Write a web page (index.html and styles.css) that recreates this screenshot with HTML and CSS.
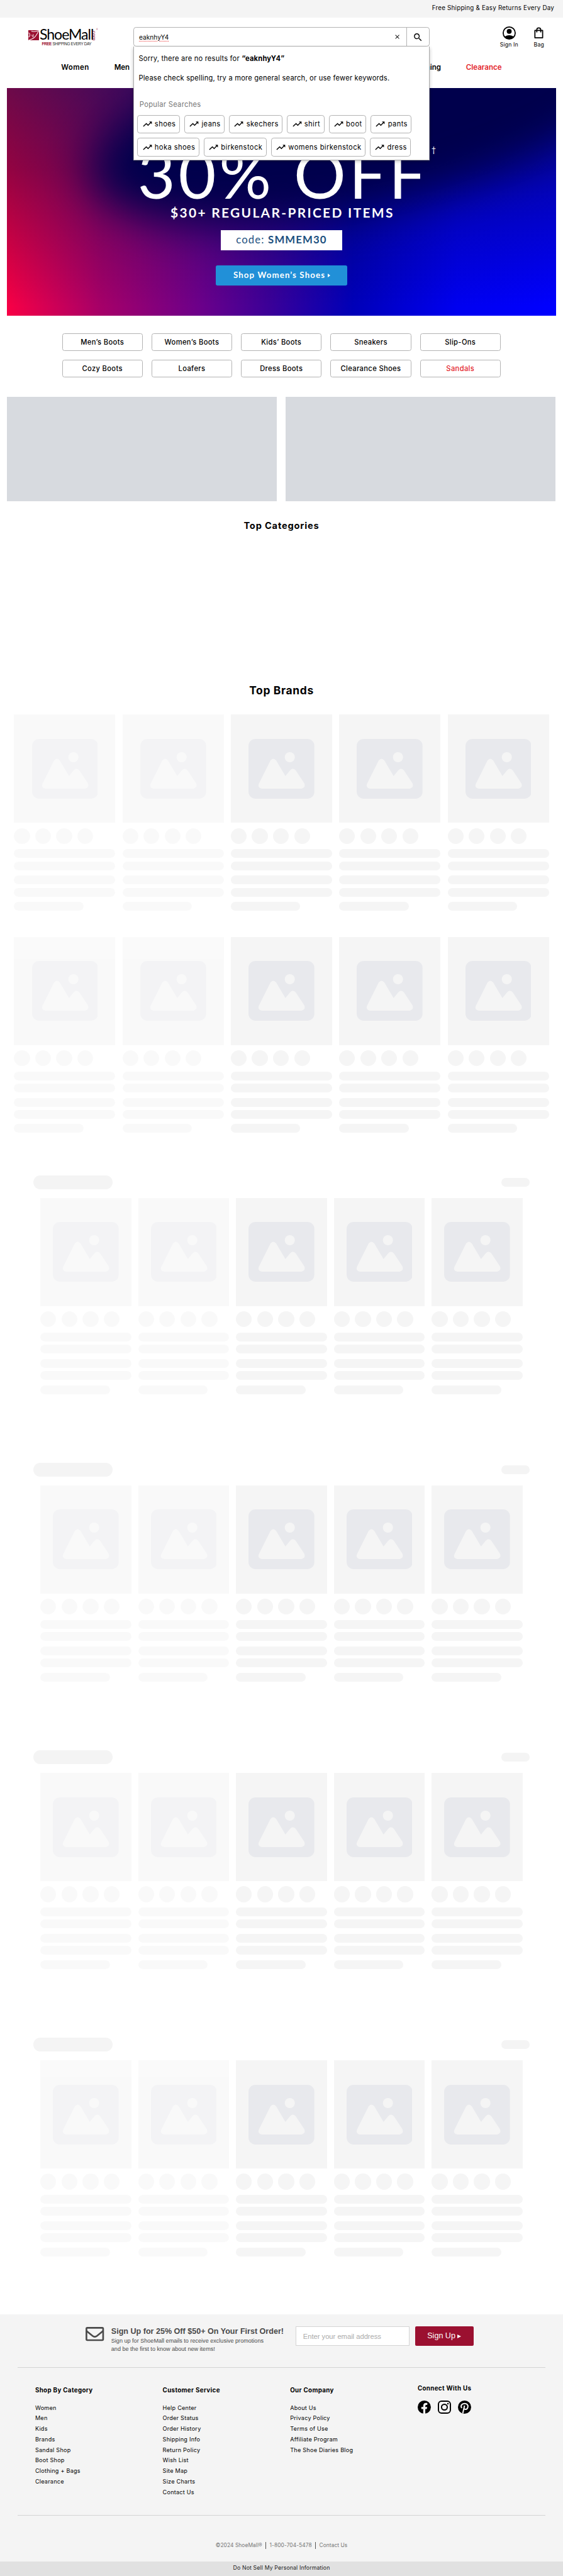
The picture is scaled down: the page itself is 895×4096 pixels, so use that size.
FILE: index.html
```html
<!DOCTYPE html>
<html lang="en">
<head>
<meta charset="utf-8">
<title>ShoeMall</title>
<link rel="stylesheet" href="styles.css">
</head>
<body>
<svg class="defs" aria-hidden="true">
  <symbol id="trend" viewBox="0 0 24 24"><path d="M16 6l2.29 2.29-4.88 4.88-4-4L2 16.59 3.41 18l6-6 4 4 6.3-6.29L22 12V6z"/></symbol>
  <symbol id="photo" viewBox="0 0 150 136"><rect width="150" height="136" rx="16" class="photo-back"/><circle cx="94" cy="41.5" r="11.5" class="photo-cut"/><path class="photo-cut" d="M50 49Q56.500 41.500 63 49L84 84.500 94.500 71.500Q101 64.500 107.500 71.500L127 101Q131 110 121 113H30Q20 111 23.500 102Z"/></symbol>
</svg>
<div class="page">
  <div class="promo-bar">Free Shipping &amp; Easy Returns Every Day</div>
  <header class="header">
    <div class="header-main">
      <a class="logo">
        <span class="logo-row">
          <svg class="logo-mark" viewBox="0 0 25 24"><rect width="25" height="24" fill="#9b1030"/><path d="M1 6c4 3 3 7 0 10M7 2c7 3 11 0 17-1C20 8 17 15 12 18s-9 4-11 5" fill="none" stroke="#fff" stroke-width="1.500"/><path d="M7 12c1-2 3-1 2 3M11 9c1 2 1 4 0 7" fill="none" stroke="#fff" stroke-width="1.300"/></svg>
          <span class="logo-name">ShoeMall</span><span class="logo-com"><sup>®</sup>com</span>
        </span>
        <span class="logo-tag"><b>FREE</b> SHIPPING EVERY DAY</span>
      </a>
      <div class="search">
        <div class="search-box">
          <span class="search-input"><span>eaknhyY4</span></span>
          <span class="search-clear"><svg viewBox="0 0 24 24"><path d="M19 6.410 17.590 5 12 10.590 6.410 5 5 6.410 10.590 12 5 17.590 6.410 19 12 13.410 17.590 19 19 17.590 13.410 12z"/></svg></span>
          <span class="search-go"><svg viewBox="0 0 24 24"><path d="M15.500 14h-.79l-.28-.27C15.410 12.590 16 11.110 16 9.500 16 5.910 13.090 3 9.500 3S3 5.910 3 9.500 5.910 16 9.500 16c1.610 0 3.090-.59 4.230-1.570l.27.28v.79l5 4.990L20.490 19l-4.990-5zm-6 0C7.010 14 5 11.990 5 9.500S7.010 5 9.500 5 14 7.010 14 9.500 11.990 14 9.500 14z"/></svg></span>
        </div>
        <div class="suggest">
          <p class="suggest-line">Sorry, there are no results for <b>“eaknhyY4”</b></p>
          <p class="suggest-line">Please check spelling, try a more general search, or use fewer keywords.</p>
          <p class="suggest-head">Popular Searches</p>
          <div class="chips">
            <span class="chip"><svg><use href="#trend"/></svg>shoes</span>
            <span class="chip"><svg><use href="#trend"/></svg>jeans</span>
            <span class="chip"><svg><use href="#trend"/></svg>skechers</span>
            <span class="chip"><svg><use href="#trend"/></svg>shirt</span>
            <span class="chip"><svg><use href="#trend"/></svg>boot</span>
            <span class="chip"><svg><use href="#trend"/></svg>pants</span>
          </div>
          <div class="chips">
            <span class="chip"><svg><use href="#trend"/></svg>hoka shoes</span>
            <span class="chip"><svg><use href="#trend"/></svg>birkenstock</span>
            <span class="chip"><svg><use href="#trend"/></svg>womens birkenstock</span>
            <span class="chip"><svg><use href="#trend"/></svg>dress</span>
          </div>
        </div>
      </div>
      <div class="tools">
        <a class="tool"><svg viewBox="0 0 30 30"><circle cx="15" cy="15" r="13.700" fill="none" stroke="#000" stroke-width="2.600"/><circle cx="15" cy="11.200" r="5.600"/><path d="M5 24C8 18.500 22 18.500 25 24 20 30 10 30 5 24Z"/></svg>Sign In</a>
        <a class="tool"><svg viewBox="0 0 30 30"><path d="M6.200 9.200h17.600v16.600H6.200zM10.500 13.500V8a4.500 4.500 0 0 1 9 0v5.500" fill="none" stroke="#000" stroke-width="2.500" stroke-linejoin="round"/></svg>Bag</a>
      </div>
    </div>
    <nav class="nav">
      <a class="nav-women">Women</a><a class="nav-men">Men</a><a class="nav-clothing"><span>Cloth</span>ing</a><a class="sale">Clearance</a>
    </nav>
  </header>

  <section class="banner">
    <div class="banner-body">
      <p class="banner-off">30% OFF<sup>†</sup></p>
      <p class="banner-items">$30+ REGULAR-PRICED ITEMS</p>
      <p class="banner-code">code: <b>SMMEM30</b></p>
      <a class="banner-cta">Shop Women’s Shoes<i></i></a>
    </div>
  </section>

  <div class="links">
    <a>Men’s Boots</a><a>Women’s Boots</a><a>Kids’ Boots</a><a>Sneakers</a><a>Slip-Ons</a>
    <a>Cozy Boots</a><a>Loafers</a><a>Dress Boots</a><a>Clearance Shoes</a><a class="sale">Sandals</a>
  </div>

  <div class="tiles"><div></div><div></div></div>
  <h2 class="top-categories">Top Categories</h2>
  <h2 class="top-brands">Top Brands</h2>

  <div class="rows"><div class="cards"></div><div class="cards"></div></div>
  <section class="shelf"><div class="shelf-head"><i></i><i></i></div><div class="cards"></div></section>
  <section class="shelf"><div class="shelf-head"><i></i><i></i></div><div class="cards"></div></section>
  <section class="shelf"><div class="shelf-head"><i></i><i></i></div><div class="cards"></div></section>
  <section class="shelf"><div class="shelf-head"><i></i><i></i></div><div class="cards"></div></section>

  <footer class="footer">
    <div class="signup">
      <svg class="mail" viewBox="0 0 42 32"><rect x="2" y="2" width="38" height="28" rx="2" fill="none" stroke="#4a4a4a" stroke-width="3.800"/><path d="M2 9l14 11.500q5 4 10 0L40 9" fill="none" stroke="#4a4a4a" stroke-width="3.800"/></svg>
      <div class="signup-text">
        <h3>Sign Up for 25% Off $50+ On Your First Order!</h3>
        <p>Sign up for ShoeMall emails to receive exclusive promotions<br>and be the first to know about new items!</p>
      </div>
      <div class="email">Enter your email address</div>
      <a class="signup-btn">Sign Up<i></i></a>
    </div>
    <div class="columns">
      <div><h4>Shop By Category</h4><a>Women</a><a>Men</a><a>Kids</a><a>Brands</a><a>Sandal Shop</a><a>Boot Shop</a><a>Clothing + Bags</a><a>Clearance</a></div>
      <div><h4>Customer Service</h4><a>Help Center</a><a>Order Status</a><a>Order History</a><a>Shipping Info</a><a>Return Policy</a><a>Wish List</a><a>Site Map</a><a>Size Charts</a><a>Contact Us</a></div>
      <div><h4>Our Company</h4><a>About Us</a><a>Privacy Policy</a><a>Terms of Use</a><a>Affiliate Program</a><a>The Shoe Diaries Blog</a></div>
      <div class="connect"><h4>Connect With Us</h4>
        <div class="social">
          <svg viewBox="0 0 30 30"><circle cx="15" cy="15" r="15"/><path fill="#f4f4f4" d="M12.600 30V19.400H8.300v-4.800h4.300v-2.300c0-4.600 2.300-6.800 6.300-6.800 1 0 2.400.2 3 .4v4h-1.700c-2 0-2.900.8-2.900 2.700v2h4.300l-.8 4.800h-3.500V30z"/></svg>
          <svg viewBox="0 0 30 30"><rect x="1.400" y="1.400" width="27.200" height="27.200" rx="7" fill="none" stroke="#000" stroke-width="2.800"/><circle cx="15" cy="15" r="6.500" fill="none" stroke="#000" stroke-width="2.800"/><circle cx="23" cy="7" r="1.800"/></svg>
          <svg viewBox="0 0 30 30"><circle cx="15" cy="15" r="15"/><path fill="none" stroke="#f4f4f4" stroke-width="2.900" d="M8.600 17.200C5 11.500 9 6.800 15.200 6.800c5.200 0 8 3.300 7.400 7.500-.6 4.600-3.800 6.700-6.700 5.500-1.600-.7-2-1.800-2-1.800M15 11.500 11 29"/></svg>
        </div>
      </div>
    </div>
    <div class="legal"><span>©2024 ShoeMall®</span><i></i><span>1-800-704-5478</span><i></i><span>Contact Us</span></div>
    <div class="privacy">Do Not Sell My Personal Information</div>
  </footer>
</div>
<script src="cards.js"></script>
</body>
</html>
```
FILE: cards.js
```js
// Fills every card row with five loading placeholders.
const card = '<div class="card"><div class="thumb"><svg><use href="#photo"/></svg></div>' +
  '<div class="dots"><i></i><i></i><i></i><i></i></div>' +
  '<div class="pair"><i></i><i></i></div><div class="pair"><i></i><i></i></div><div class="short"></div></div>';
document.querySelectorAll('.cards').forEach((row) => { row.innerHTML = card.repeat(5); });
```
FILE: styles.css
```css
* { box-sizing: border-box; }
html, body { margin: 0; background: #fff; overflow-x: hidden; }
.page { zoom: 0.69886; width: 1280.66px; font: 16px/24px Inter, "Open Sans", sans-serif; color: #000; }
p, h2, h3, h4 { margin: 0; }
svg { display: block; flex: none; }
.defs { position: absolute; width: 0; height: 0; }

.promo-bar { height: 40px; background: #f4f4f4; text-align: right; padding: 7px 20px 0 0; font-size: 14px; letter-spacing: .34px; }

.header { height: 160px; background: #fff; }
.header-main { display: flex; height: 86px; padding: 22px 0 0 64px; }
.logo { width: 239px; padding-top: 3px; display: flex; flex-direction: column; }
.logo-row { display: flex; height: 27px; align-items: flex-end; }
.logo-mark { width: 25px; height: 24px; }
.logo-name { font: 33px/30px Lato, sans-serif; width: 121px; padding-left: 1px; margin-bottom: -1px; letter-spacing: -1.400px; }
.logo-com { writing-mode: vertical-rl; font: 12px/8px Lato, sans-serif; color: #9b1030; height: 27px; }
.logo-com sup { font-size: 5px; }
.logo-tag { font: 9px/12px "Liberation Sans", sans-serif; padding: 3px 0 0 31px; color: #222; white-space: nowrap; letter-spacing: -.4px; }
.logo-tag b { color: #9b1030; }

.search { position: relative; width: 674px; z-index: 5; }
.search-box { display: flex; height: 44px; border: 1px solid #b3b3b3; border-radius: 6px; background: #fff; }
.search-input { flex: 1; padding: 9px 0 0 12px; font-size: 14.500px; }
.search-input span { text-decoration: underline dotted #e33 1.500px; text-underline-offset: 3px; }
.search-clear { width: 43px; padding: 13px 0 0 14px; }
.search-clear svg { width: 16px; }
.search-go { width: 51px; border-left: 1px solid #b3b3b3; padding: 9px 0 0 13px; }
.search-go svg { width: 24px; }
.suggest { position: absolute; top: 44px; left: 0; width: 674px; height: 259px; background: #fff; border: 1px solid #aaa; border-top: 0; box-shadow: 0 3px 8px rgba(0,0,0,.25); padding: 16px 0 0 8px; letter-spacing: .26px; }
.suggest-line { height: 44px; padding-left: 3px; }
.suggest-head { padding: 16px 0 0 5px; height: 52px; color: #777; letter-spacing: .42px; }
.chips { display: flex; gap: 10px; margin-bottom: 10px; }
.chip { display: flex; align-items: center; height: 42px; border: 1px solid #b3b3b3; border-radius: 6px; padding: 0 8px 0 9px; gap: 5px; white-space: nowrap; letter-spacing: .56px; }
.chip svg { width: 24px; height: 24px; }

.tools { display: flex; padding: 0 0 0 149px; gap: 4px; font-size: 12.500px; line-height: 16px; margin-top: -2px; }
.tool { display: flex; flex-direction: column; align-items: center; width: 64px; letter-spacing: .15px; }
.tool svg { width: 30px; height: 30px; margin-bottom: 4px; }

.nav { display: flex; padding: 15px 0 0 139px; font-weight: 600; font-size: 16.500px; }
.nav-women { width: 121px; letter-spacing: .6px; }
.nav-men { width: 676px; }
.nav-clothing { width: 124px; }
.sale { color: #e3242b; }

.banner { position: relative; height: 518px; margin: 0 16px; overflow: hidden; color: #fff;
  background: linear-gradient(180deg, rgba(8,16,76,.58), rgba(8,8,60,.42) 35%, transparent 96%), linear-gradient(90deg, #f80045, #a60068 17%, #6c008a 35%, #3a0098 48%, #0000b8 63%, #0000f0 82%, #00f); }
.banner::before { content: ""; position: absolute; left: 180px; top: -130px; width: 1250px; height: 400px; border-radius: 50%; background: #00004c; transform: rotate(-12deg); filter: blur(50px); }
.banner-body { position: relative; display: flex; flex-direction: column; align-items: center; font-family: Lato, sans-serif; white-space: nowrap; }
.banner-off { position: relative; font-size: 148px; line-height: 150px; height: 150px; margin-top: 120px; padding-left: 7px; letter-spacing: 6.800px; }
.banner-off sup { position: absolute; right: -17px; top: 10px; font-size: 18px; line-height: 24px; letter-spacing: 0; }
.banner-items { font-size: 30px; line-height: 30px; font-weight: 700; padding-left: 4px; letter-spacing: 3.300px; }
.banner-code { width: 276px; height: 46px; margin-top: 24px; background: #fff; color: #1d5180; font-size: 24px; line-height: 44px; text-align: center; letter-spacing: 1.600px; }
.banner-cta { display: flex; align-items: center; gap: 6px; height: 45px; width: 299px; padding-left: 40px; margin-top: 34px; border-radius: 4px; background: #2190d8; font-size: 19px; font-weight: 700; letter-spacing: 1.600px; }
.banner-cta i { border-left: 7px solid #fff; border-top: 5px solid transparent; border-bottom: 5px solid transparent; }

.links { display: grid; grid-template-columns: repeat(5, 183.600px); gap: 20px; padding: 40px 0 0 141px; }
.links a { height: 40px; border: 1px solid #b3b3b3; border-radius: 5px; text-align: center; line-height: 38px; font-weight: 500; letter-spacing: .5px; }

.tiles { display: grid; grid-template-columns: 614px 614px; gap: 20px; padding: 45px 0 0 16px; }
.tiles div { height: 237px; background: #d7dadf; }
h2 { text-align: center; font-weight: 700; }
.top-categories { font-size: 21px; line-height: 30px; margin-top: 42px; letter-spacing: 1.150px; }
.top-brands { font-size: 25px; line-height: 36px; margin-top: 340px; letter-spacing: .9px; }

.rows { padding: 38px 32px 0; display: grid; row-gap: 60px; margin-bottom: 96px; }
.cards { display: grid; grid-template-columns: repeat(5, 1fr); gap: 16px; }
.card { height: 446px; display: flex; flex-direction: column; gap: 12px; }
.card:nth-child(-n+2) { opacity: .5; }
.thumb { height: 246px; background: #f5f5f5; display: flex; align-items: center; justify-content: center; }
.thumb svg { width: 150px; height: 136px; }
.photo-back { fill: #e8e9ed; }
.photo-cut { fill: #f5f5f5; }
.dots { display: flex; gap: 12px; }
.dots i { width: 36px; height: 36px; border-radius: 50%; background: #f5f5f5; }
.pair { display: grid; gap: 8px; }
.pair i, .short { height: 20px; border-radius: 10px; background: #f5f5f5; }
.short { width: 158px; }
.shelf { height: 654px; padding: 0 76px; }
.shelf-head { display: flex; justify-content: space-between; align-items: center; }
.shelf-head i { width: 180px; height: 32px; border-radius: 16px; background: #f4f4f4; }
.shelf-head i + i { width: 64px; height: 20px; border-radius: 10px; }
.shelf .cards { padding: 20px 16px 0; }

.footer { background: #f4f4f4; margin-top: -24px; }
.signup { display: flex; margin: 0 40px; height: 121px; border-bottom: 1px solid #d4d4d4; padding: 27px 0 0 155px; font-family: "Liberation Sans", sans-serif; color: #4a4a4a; }
.mail { width: 42px; height: 32px; margin-top: 2px; }
.signup-text { width: 420px; margin-left: 16px; }
.signup-text h3 { font-size: 18px; line-height: 24px; }
.signup-text p { font-size: 13px; line-height: 18.500px; margin-top: 1px; }
.email { width: 259px; height: 45px; border: 1px solid #d4d4d4; background: #fff; color: #aaa; font-size: 16px; line-height: 44px; padding-left: 15px; }
.signup-btn { display: flex; align-items: center; gap: 5px; width: 134px; height: 45px; margin-left: 12px; padding-left: 28px; border-radius: 3px; background: #9b1030; color: #fff; font-size: 18px; }
.signup-btn i { border-left: 9px solid #fff; border-top: 4.500px solid transparent; border-bottom: 4.500px solid transparent; margin-top: 2px; }
.columns { display: grid; grid-template-columns: repeat(4, 290px); margin: 0 40px; height: 337px; border-bottom: 1px solid #d4d4d4; padding: 40px 0 0 40px; align-content: start; font-size: 13px; letter-spacing: .35px; }
.columns h4 { font-size: 14px; line-height: 24px; font-weight: 700; margin-bottom: 16px; letter-spacing: .5px; }
.columns a { display: block; }
.connect h4 { margin: -3px 0 14px; }
.social { display: flex; gap: 16px; }
.social svg { width: 30px; height: 30px; }
.legal { display: flex; justify-content: center; gap: 8px; height: 104px; padding-top: 56px; font-size: 12px; color: #777; letter-spacing: .1px; }
.legal i { width: 1px; height: 16px; margin-top: 4px; background: #555; }
.privacy { height: 33px; background: #e1e1e1; text-align: center; line-height: 31px; font-size: 12.500px; letter-spacing: .2px; color: #222; }
```
